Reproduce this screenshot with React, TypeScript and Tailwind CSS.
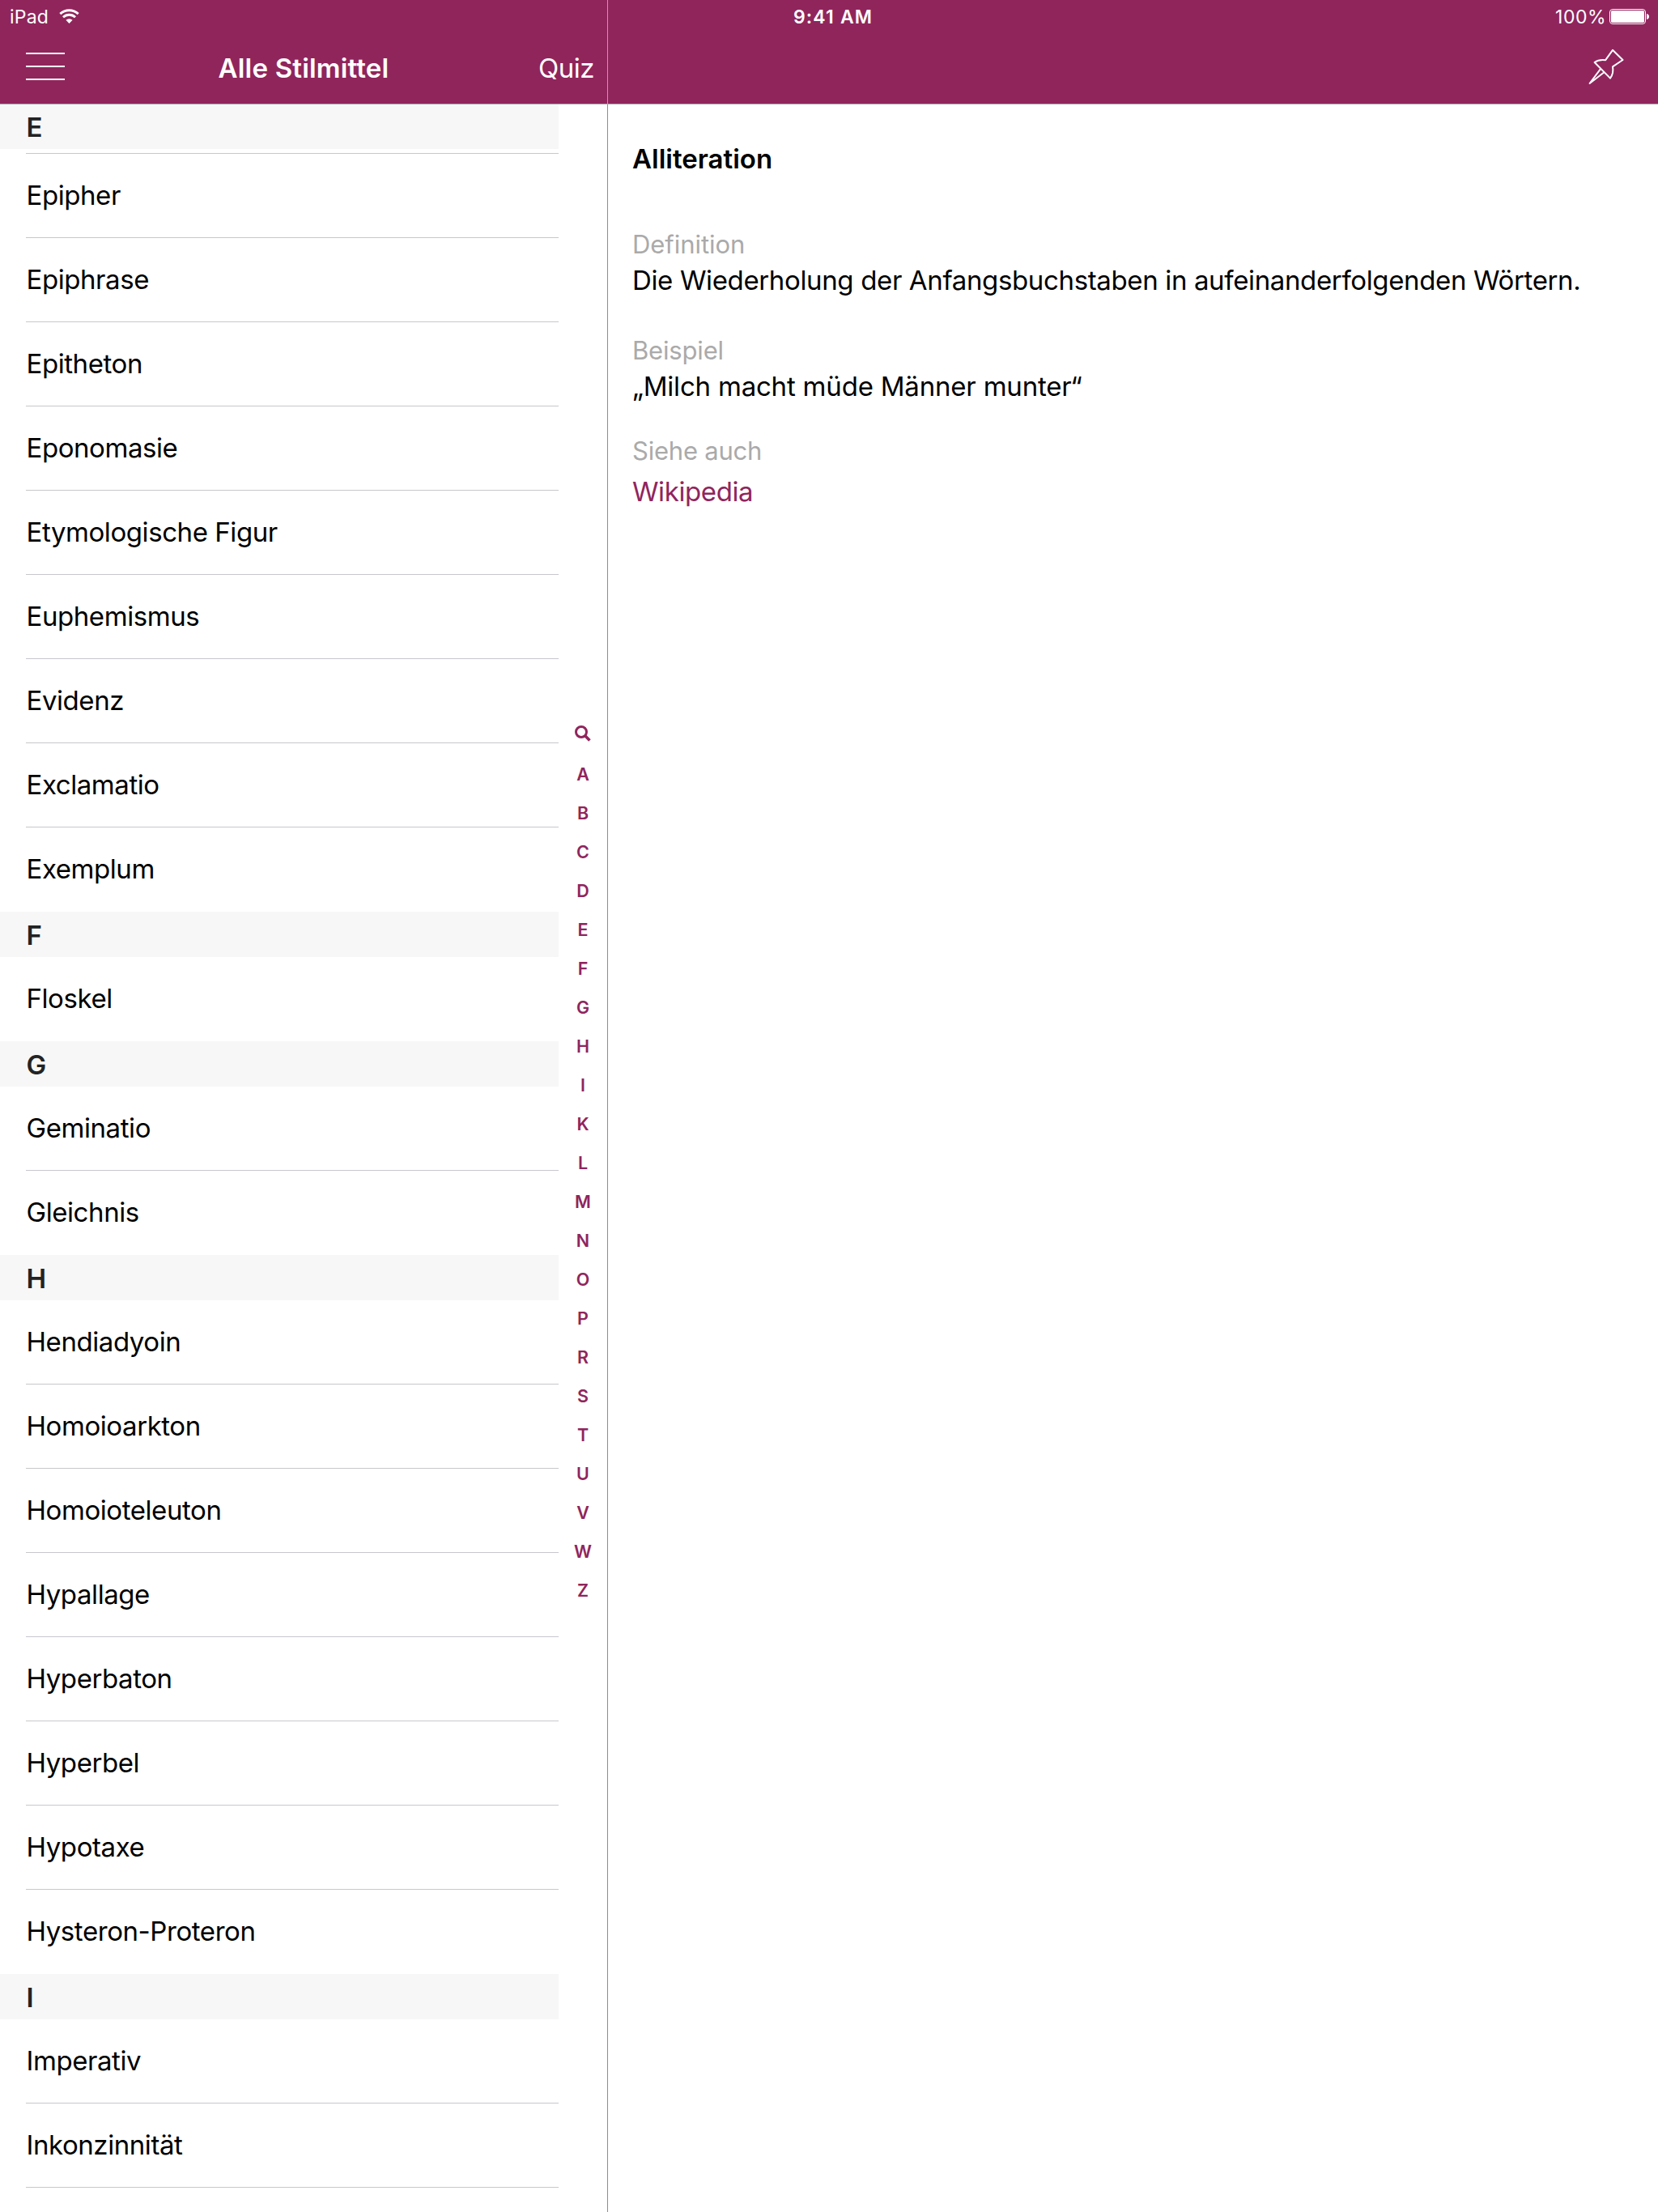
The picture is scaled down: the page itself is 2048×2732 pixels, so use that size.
import React from "react";

type Section = { letter: string; items: string[] };

const sections: Section[] = [
  { letter: "F", items: ["Floskel"] },
  { letter: "G", items: ["Geminatio", "Gleichnis"] },
  {
    letter: "H",
    items: [
      "Hendiadyoin",
      "Homoioarkton",
      "Homoioteleuton",
      "Hypallage",
      "Hyperbaton",
      "Hyperbel",
      "Hypotaxe",
      "Hysteron-Proteron",
    ],
  },
];

const eItems = [
  "Epipher",
  "Epiphrase",
  "Epitheton",
  "Eponomasie",
  "Etymologische Figur",
  "Euphemismus",
  "Evidenz",
  "Exclamatio",
  "Exemplum",
];

const indexLetters = "ABCDEFGHIKLMNOPRSTUVWZ".split("");

function WifiIcon() {
  return (
    <svg width="26" height="20" viewBox="0 0 26 20" fill="none" stroke="white" strokeWidth="2.9">
      <path d="M1.3 7.1A16.6 16.6 0 0 1 23.7 7.1" />
      <path d="M5 11.2A11 11 0 0 1 20 11.2" />
      <path d="M12.5 19L8.4 14.8A5.9 5.9 0 0 1 16.6 14.8Z" fill="white" stroke="none" />
    </svg>
  );
}

function BatteryIcon() {
  return (
    <svg width="50" height="20" viewBox="0 0 50 20" fill="none">
      <rect x="0.5" y="1.5" width="44" height="18" rx="3.5" stroke="white" />
      <rect x="2" y="3" width="41" height="15" rx="1.8" fill="white" />
      <path d="M46 7C48.2 7.4 49 8.8 49 10.5S48.2 13.6 46 14Z" fill="white" />
    </svg>
  );
}

function PinIcon() {
  return (
    <svg
      width="46"
      height="46"
      viewBox="1960 60 46 46"
      fill="none"
      stroke="white"
      strokeWidth="2"
      strokeLinejoin="round"
    >
      <path d="M1992 61.8L2004.5 74L1992 82.4C1993 87.5 1992 92.5 1989 96.6L1969.6 77C1973.5 74.2 1978 73.4 1983.2 74.2Z" />
      <path d="M1977.4 84.6L1963.6 103L1981.8 89" />
    </svg>
  );
}

function SearchIcon() {
  return (
    <svg width="20" height="20" viewBox="0 0 20 20" fill="none" stroke="#90255c">
      <circle cx="8" cy="8" r="6.5" strokeWidth="3" />
      <path d="M12.8 12.8L18.4 18.4" strokeWidth="3.6" />
    </svg>
  );
}

function Row({ label, line = true }: { label: string; line?: boolean }) {
  return (
    <div className="ml-8 h-[104px] shrink-0">
      <div className={line ? "h-full border-b border-[#c8c7cc]" : "h-full"}>
        <span className="block pl-[0.5px] text-[33px] leading-[102px] tracking-[-0.43px] whitespace-nowrap text-black">
          {label}
        </span>
      </div>
    </div>
  );
}

function SectionHeader({ letter }: { letter: string }) {
  return (
    <div className="h-14 shrink-0 bg-[#f7f7f7] pl-[32.5px]">
      <span className="block text-[33px] leading-[58px] font-semibold text-[#232323]">{letter}</span>
    </div>
  );
}

export default function App() {
  return (
    <div className="flex h-[2732px] w-[2048px] overflow-hidden bg-white font-[Inter,sans-serif] text-black">
      <aside className="flex w-[750px] flex-col">
        <header className="h-[129px] shrink-0 border-b border-[#a7a7aa] bg-[#90255c] text-white">
          <div className="flex h-10 items-start pt-[7px] pl-3">
            <span className="text-[23px] leading-7 tracking-[0.2px]">iPad</span>
            <div className="ml-[13px] pt-[3px]">
              <WifiIcon />
            </div>
          </div>
          <div className="grid grid-cols-[1fr_auto_1fr] pt-6">
            <div className="flex flex-col gap-[14px] pt-px pl-8">
              <div className="h-0.5 w-12 bg-white" />
              <div className="h-0.5 w-12 bg-white" />
              <div className="h-0.5 w-12 bg-white" />
            </div>
            <h1 className="text-[33px] leading-10 font-semibold tracking-[0.19px]">Alle Stilmittel</h1>
            <span className="pr-4 text-right text-[33px] leading-10 tracking-[-0.5px]">Quiz</span>
          </div>
        </header>

        <div className="flex min-h-0 flex-1">
          <div className="flex w-[690px] flex-col overflow-hidden">
            <div className="h-[55px] shrink-0 bg-[#f7f7f7] pl-[32.5px]">
              <span className="block text-[33px] leading-[56px] font-semibold text-[#232323]">E</span>
            </div>
            <div className="ml-8 h-[6px] shrink-0 border-b border-[#c8c7cc]" />
            {eItems.map((name, i) => (
              <Row key={name} label={name} line={i < eItems.length - 1} />
            ))}
            {sections.map((s) => (
              <React.Fragment key={s.letter}>
                <SectionHeader letter={s.letter} />
                {s.items.map((name, i) => (
                  <Row key={name} label={name} line={i < s.items.length - 1} />
                ))}
              </React.Fragment>
            ))}
            <SectionHeader letter="I" />
            <Row label="Imperativ" />
            <Row label="Inkonzinnität" />
          </div>

          <nav className="flex w-[60px] flex-col items-center pt-[767px]">
            <div className="h-9">
              <SearchIcon />
            </div>
            {indexLetters.map((l) => (
              <span key={l} className="h-12 text-[21.5px] leading-12 font-semibold text-[#90255c]">
                {l}
              </span>
            ))}
          </nav>
        </div>
      </aside>

      <div className="flex w-px flex-col">
        <div className="h-[129px] bg-[#a7a7aa]" />
        <div className="flex-1 bg-[#8e8e90]" />
      </div>

      <main className="flex flex-1 flex-col">
        <header className="h-[129px] shrink-0 border-b border-[#a7a7aa] bg-[#90255c] text-white">
          <div className="flex h-10 items-start justify-between pt-[7px] pr-[10px] pl-[229px]">
            <span className="text-[23px] leading-7 font-semibold tracking-[1.15px]">9:41 AM</span>
            <div className="flex items-start gap-1">
              <span className="text-[23px] leading-7 tracking-[0.5px]">100%</span>
              <div className="pt-[3px]">
                <BatteryIcon />
              </div>
            </div>
          </div>
          <div className="flex justify-end pt-5 pr-[42px]">
            <PinIcon />
          </div>
        </header>

        <article className="flex flex-col pt-[47px] pl-[30px] text-[33px] leading-10 whitespace-nowrap">
          <h2 className="font-semibold">Alliteration</h2>
          <span className="mt-[67px] text-[31px] leading-[37px] tracking-[-0.05px] text-[#aaaaaa]">Definition</span>
          <p className="mt-[6px] tracking-[-0.36px]">
            Die Wiederholung der Anfangsbuchstaben in aufeinanderfolgenden Wörtern.
          </p>
          <span className="mt-12 text-[31px] leading-[37px] tracking-[-0.18px] text-[#aaaaaa]">Beispiel</span>
          <p className="mt-[6px] tracking-[-0.2px]">„Milch macht müde Männer munter“</p>
          <span className="mt-[41px] text-[31px] leading-[37px] tracking-[-0.23px] text-[#aaaaaa]">Siehe auch</span>
          <a className="mt-3 tracking-[-0.4px] text-[#90255c]">Wikipedia</a>
        </article>
      </main>
    </div>
  );
}
